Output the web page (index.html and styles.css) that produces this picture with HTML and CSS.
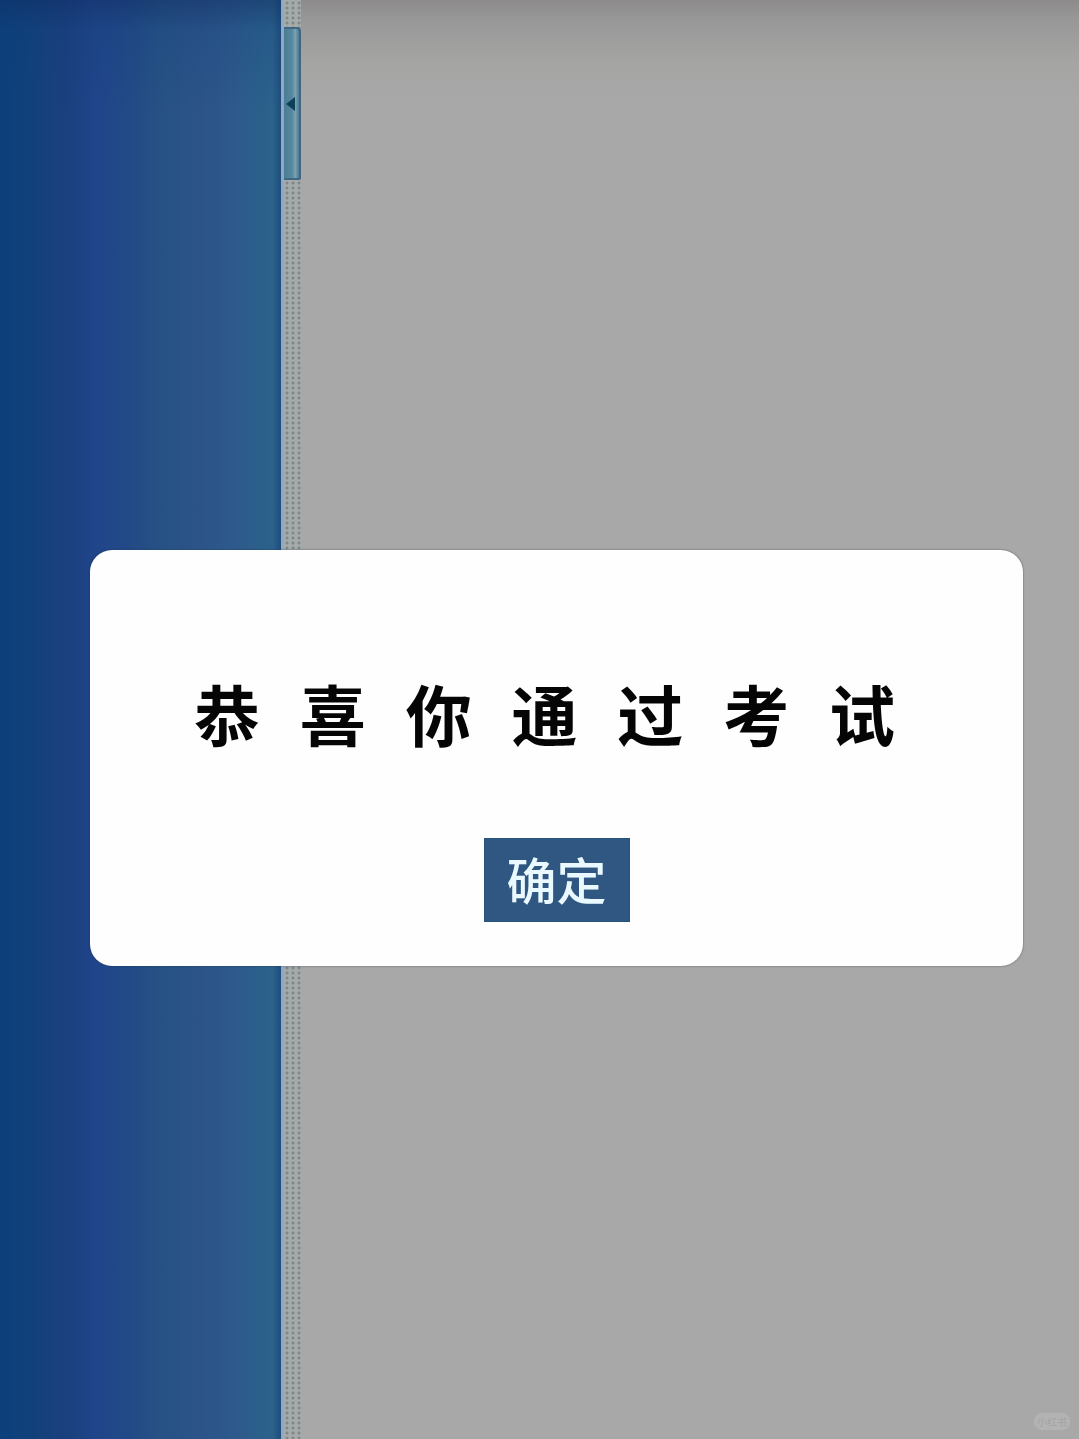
FILE: index.html
```html
<!DOCTYPE html>
<html lang="zh-CN">
  <head>
    <title>恭喜你通过考试</title>
    <meta charset="UTF-8" />
    <meta name="viewport" content="width=device-width, initial-scale=1" />
    <link rel="stylesheet" href="styles.css">
  </head>
  <body>
    <div class="page">
      <aside class="sidebar"></aside>
      <div class="splitter">
        <button class="collapse" type="button" aria-label="收起">
          <svg class="arrow" viewBox="0 0 9 14"><path d="M0 7 L9 0 V14 Z" /></svg>
        </button>
      </div>
      <main class="content">
        <span class="watermark">小红书</span>
      </main>
    </div>

    <div class="overlay">
      <section class="dialog" role="dialog" aria-labelledby="message">
        <h1 class="message" id="message">
          <span>恭</span><span>喜</span><span>你</span><span>通</span><span>过</span><span>考</span><span>试</span>
        </h1>
        <button class="confirm" type="button">确定</button>
      </section>
    </div>
  </body>
</html>
```
FILE: styles.css
```css
* {
  box-sizing: border-box;
}
body {
  margin: 0;
  font-family: "Noto Sans CJK SC", sans-serif;
  background: #a8a8a8;
}
.page {
  display: flex;
  min-height: 100vh;
}
.sidebar {
  width: 26%;
  background:
    linear-gradient(rgba(15, 45, 100, 0.5), rgba(15, 60, 120, 0.2) 30px, transparent 110px),
    linear-gradient(90deg, #0c407c, #12417a 12%, #1b407e 24%, #20458a 34%, #224a86 46%, #275285 58%, #2c5489 72%, #2d5a8c 84%, #2b628b 97%, #204d7c);
}
/* drag bar between the two panes */
.splitter {
  width: 20px;
  padding-top: 27px;
  border-left: 3px solid #8caac6;
  background:
    radial-gradient(circle at 3px 3px, #828887 1px, transparent 2px) 0 0 / 6px 5px,
    #a5abab;
}
.collapse {
  display: flex;
  align-items: center;
  justify-content: center;
  width: 100%;
  height: 153px;
  padding: 0;
  border: 2px solid #3f6682;
  border-left: 0;
  border-radius: 0 4px 2px 0;
  background: linear-gradient(90deg, #4c7c94, #5688a0 55%, #79a5b3 75%, #4f7790);
}
.arrow {
  width: 9px;
  height: 14px;
  margin-right: 2px;
  fill: #0b4257;
}
.content {
  flex: 1;
  display: flex;
  align-items: flex-end;
  justify-content: flex-end;
  padding: 9px;
  background: linear-gradient(#8c8a8a, #999898 20px, #a4a4a3 60px, #a8a8a8 100px);
}
.watermark {
  padding: 0 3px;
  border-radius: 8px;
  font-size: 10px;
  line-height: 17px;
  color: #a3a3a3;
  background: #b3b3b3;
}
.overlay {
  position: fixed;
  inset: 0;
  display: flex;
  align-items: center;
  padding: 77px 56px 0 90px;
}
.dialog {
  display: flex;
  flex-direction: column;
  align-items: center;
  gap: 78px;
  width: 100%;
  padding: 114px 128px 44px 104px;
  border-radius: 22px;
  background: #fefefe;
  box-shadow: 0 0 2px rgba(30, 50, 70, 0.7);
}
.message {
  display: flex;
  justify-content: space-between;
  width: 100%;
  margin: 0;
  font-size: 66px;
  font-weight: 700;
  line-height: 96px;
  color: #050505;
}
.confirm {
  margin-left: 24px;
  padding: 0 22px 4px;
  border: 1px solid #27547c;
  font-family: inherit;
  font-size: 50px;
  font-weight: 500;
  line-height: 78px;
  color: #e9f9ff;
  background: #2f5781;
}
```
